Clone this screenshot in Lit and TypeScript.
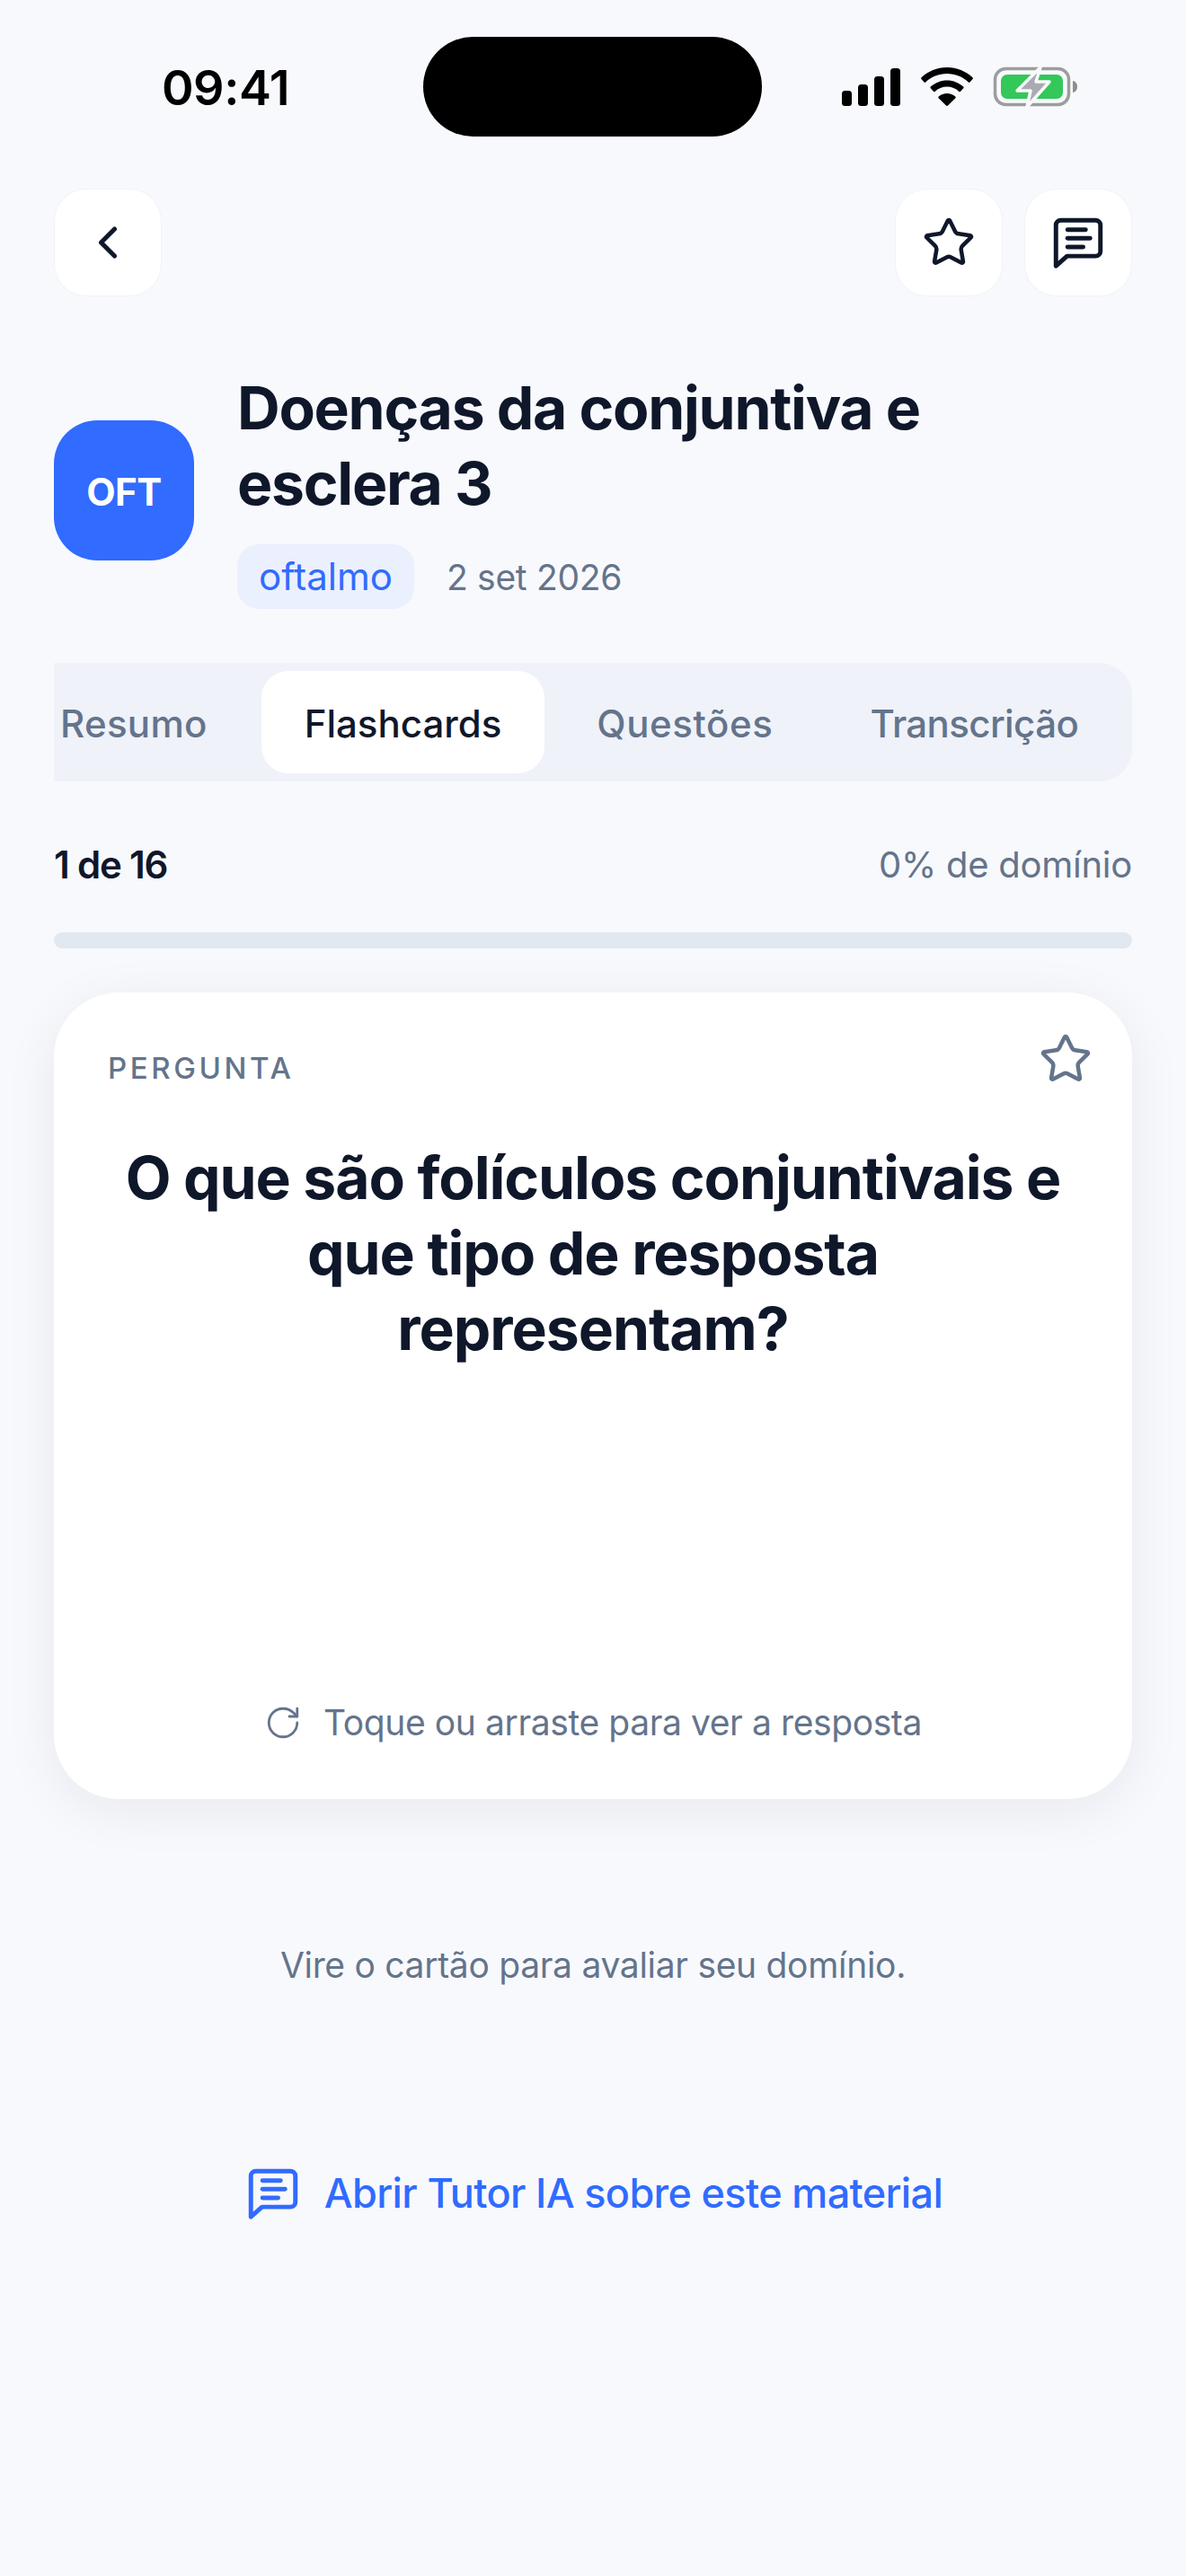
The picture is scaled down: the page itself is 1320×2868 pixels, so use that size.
import { LitElement, html, css, svg } from "lit";
import { customElement } from "lit/decorators.js";

const star = svg`<path d="M11.525 2.295a.53.53 0 0 1 .95 0l2.31 4.679a2.123 2.123 0 0 0 1.595 1.16l5.166.756a.53.53 0 0 1 .294.904l-3.736 3.638a2.123 2.123 0 0 0-.611 1.878l.882 5.14a.53.53 0 0 1-.771.56l-4.618-2.428a2.122 2.122 0 0 0-1.973 0L6.396 21.01a.53.53 0 0 1-.77-.56l.881-5.139a2.122 2.122 0 0 0-.611-1.879L2.16 9.795a.53.53 0 0 1 .294-.906l5.165-.755a2.122 2.122 0 0 0 1.597-1.16z"/>`;
const chat = svg`<path d="M21 15.500a2 2 0 0 1-2 2H7.500L3 21.500V5a2 2 0 0 1 2-2h14a2 2 0 0 1 2 2z"/><path d="M7.700 6.800H15"/><path d="M7.700 10.300H16.800"/><path d="M7.700 13.800H14"/>`;

@customElement("app-root")
export class AppRoot extends LitElement {
  static styles = css`
    :host { display: block; width: 1320px; height: 2868px; background: #f8f9fd; font-family: "Inter", "Liberation Sans", sans-serif; color: #0f172a; overflow: hidden; }
    svg { display: block; fill: none; stroke: currentColor; stroke-linecap: round; stroke-linejoin: round; }
    .status { display: flex; align-items: center; height: 111px; padding: 41px 0 0 180px; }
    .time { width: 291px; font-size: 54px; font-weight: 600; color: #000; letter-spacing: -0.5px; line-height: 60px; padding-top: 3px; box-sizing: border-box; }
    .island { width: 377px; height: 111px; border-radius: 56px; background: #000; }
    .sicons { display: flex; align-items: center; margin-left: 89px; }
    .sicons svg { stroke: none; fill: #000; }
    .wifi { margin-left: 22px; }
    .batt { margin-left: 23px; }
    .nav { display: flex; justify-content: space-between; padding: 0 60px; margin-top: 58px; }
    .nav-right { display: flex; gap: 24px; }
    .ibtn { width: 120px; height: 120px; border-radius: 36px; background: #fff; border: 1px solid #f1f3f8; box-sizing: border-box; display: flex; align-items: center; justify-content: center; color: #0f172a; }
    .head { display: flex; align-items: center; gap: 48px; padding: 0 60px; margin-top: 82px; }
    .logo { width: 156px; height: 156px; flex: none; box-sizing: border-box; padding-top: 2px; margin-top: 2px; border-radius: 48px; background: #316bff; color: #fff; font-size: 42px; font-weight: 700; display: flex; align-items: center; justify-content: center; letter-spacing: -0.5px; }
    h1 { margin: 0; font-size: 66px; line-height: 84px; font-weight: 700; letter-spacing: -1.28px; color: #0f172a; }
    .meta { display: flex; align-items: center; gap: 36px; margin-top: 26px; }
    .pill { height: 72px; padding: 0 24px; border-radius: 24px; background: #ebf0fe; color: #316bff; font-size: 42px; line-height: 72px; }
    .date { font-size: 39px; color: #64748b; letter-spacing: -0.3px; }
    .tabs { margin: 60px 60px 0; height: 132px; border-radius: 0 36px 36px 0; background: #eff2f9; overflow: hidden; padding: 9px 0; box-sizing: border-box; }
    .tabs-in { display: flex; gap: 12px; margin-left: -41px; width: max-content; }
    .tab { height: 114px; line-height: 117px; padding: 0 48px; font-size: 42px; font-weight: 500; color: #64748b; letter-spacing: 0; border-radius: 30px; }
    .tab.on { background: #fff; color: #0f172a; }
    .tab.res { letter-spacing: 0.3px; }
    .tab.que { letter-spacing: 0.6px; margin-left: -2px; }
    .tab.tra { letter-spacing: -0.6px; }
    .prog { display: flex; justify-content: space-between; align-items: center; padding: 0 60px; margin-top: 62px; height: 60px; font-size: 42px; }
    .cnt { font-weight: 600; letter-spacing: -1.2px; color: #0f172a; }
    .dom { color: #64748b; letter-spacing: -0.25px; font-size: 40px; }
    .bar { margin: 46px 60px 0; height: 18px; border-radius: 9px; background: #e2e8f0; }
    .card { position: relative; margin: 49px 60px 0; height: 898px; border-radius: 72px; background: #fff; box-shadow: 0 12px 60px rgba(15, 23, 42, .07); padding: 0 60px; box-sizing: border-box; display: flex; flex-direction: column; }
    .lab { margin-top: 66px; font-size: 33px; line-height: 36px; font-weight: 500; letter-spacing: 3.6px; color: #64748b; }
    .cstar { position: absolute; top: 44px; right: 44px; color: #64748b; }
    .q { margin: 0; padding-top: 62px; text-align: center; font-size: 66px; line-height: 84px; font-weight: 700; letter-spacing: -1.07px; color: #0f172a; }
    .hint { margin-top: auto; margin-bottom: 61px; display: flex; align-items: center; justify-content: center; gap: 24px; color: #64748b; font-size: 39px; line-height: 48px; letter-spacing: -0.4px; }
    .flip { margin-top: 158px; text-align: center; font-size: 39px; line-height: 54px; color: #64748b; letter-spacing: -0.3px; }
    .link { margin-top: 194px; display: flex; align-items: center; justify-content: center; gap: 24px; color: #316bff; font-size: 45px; font-weight: 500; letter-spacing: -0.65px; line-height: 54px; }
  `;

  render() {
    return html`
      <div class="status">
        <div class="time">09:41</div>
        <div class="island"></div>
        <div class="sicons">
          <svg width="66" height="42" viewBox="0 0 66 42"><rect x="0" y="25" width="11" height="17" rx="3.5"/><rect x="18" y="18" width="11" height="24" rx="3.5"/><rect x="36" y="9" width="11" height="33" rx="3.5"/><rect x="54" y="0" width="11" height="42" rx="3.5"/></svg>
          <svg class="wifi" width="58" height="43" viewBox="0 0 58 43"><path d="M29 0c11 0 21 4.300 28.500 11.300c.5.5.5 1.300 0 1.800l-3 3.400c-.5.5-1.200.5-1.700 0C46.500 10.500 38.200 7 29 7S11.500 10.500 5.200 16.500c-.5.5-1.200.5-1.700 0L.5 13.100c-.5-.5-.5-1.300 0-1.800C8 4.300 18 0 29 0z"/><path d="M29 14.500c7 0 13.400 2.700 18.200 7.100.5.5.5 1.200 0 1.700l-3.100 3.500c-.5.500-1.200.5-1.700.1C38.800 23.500 34.100 21.500 29 21.500s-9.800 2-13.400 5.400c-.5.400-1.200.4-1.700-.1l-3.100-3.500c-.5-.5-.5-1.200 0-1.700C15.600 17.200 22 14.500 29 14.500z"/><path d="M29 29c3.600 0 6.800 1.300 9.300 3.500.5.500.5 1.200.1 1.700L30 42.600c-.5.500-1.500.5-2 0l-8.400-8.400c-.4-.5-.4-1.200.1-1.700 2.500-2.200 5.700-3.500 9.300-3.500z"/></svg>
          <svg class="batt" width="94" height="44" viewBox="0 0 94 44" style="overflow:visible">
            <rect x="1.500" y="1.500" width="82" height="40" rx="12" fill="none" stroke="#9d9d9d" stroke-width="3.500"/>
            <rect x="8" y="8" width="69" height="27" rx="7" fill="#34c759"/>
            <path d="M88 15c3 .5 5 3 5 6.500s-2 6-5 6.500z" fill="#8e8e8e"/>
            <path d="M52 0L26 26H41L37 44L62 16H47z" fill="#a9abb0" stroke="#f8f9fd" stroke-width="3.500" stroke-linejoin="round"/>
          </svg>
        </div>
      </div>

      <div class="nav">
        <div class="ibtn"><svg width="60" height="60" viewBox="0 0 24 24" stroke-width="2"><path d="M15 18l-6-6 6-6"/></svg></div>
        <div class="nav-right">
          <div class="ibtn"><svg width="60" height="60" viewBox="0 0 24 24" stroke-width="1.800">${star}</svg></div>
          <div class="ibtn"><svg width="66" height="66" viewBox="0 0 24 24" stroke-width="1.800">${chat}</svg></div>
        </div>
      </div>

      <div class="head">
        <div class="logo">OFT</div>
        <div>
          <h1>Doenças da conjuntiva e<br />esclera 3</h1>
          <div class="meta"><span class="pill">oftalmo</span><span class="date">2 set 2026</span></div>
        </div>
      </div>

      <div class="tabs">
        <div class="tabs-in">
          <div class="tab res">Resumo</div>
          <div class="tab on">Flashcards</div>
          <div class="tab que">Questões</div>
          <div class="tab tra">Transcrição</div>
        </div>
      </div>

      <div class="prog"><span class="cnt">1 de 16</span><span class="dom">0% de domínio</span></div>
      <div class="bar"></div>

      <div class="card">
        <div class="lab">PERGUNTA</div>
        <svg class="cstar" width="60" height="60" viewBox="0 0 24 24" stroke-width="1.800">${star}</svg>
        <p class="q">O que são folículos conjuntivais e<br />que tipo de resposta<br />representam?</p>
        <div class="hint">
          <svg width="42" height="42" viewBox="0 0 24 24" stroke-width="1.600"><path d="M21 12a9 9 0 1 1-9-9c2.520 0 4.930 1 6.740 2.740L21 8"/><path d="M21 3v5h-5"/></svg>
          <span>Toque ou arraste para ver a resposta</span>
        </div>
      </div>

      <div class="flip">Vire o cartão para avaliar seu domínio.</div>

      <div class="link">
        <svg width="66" height="66" viewBox="0 0 24 24" stroke-width="1.800">${chat}</svg>
        <span>Abrir Tutor IA sobre este material</span>
      </div>
    `;
  }
}
